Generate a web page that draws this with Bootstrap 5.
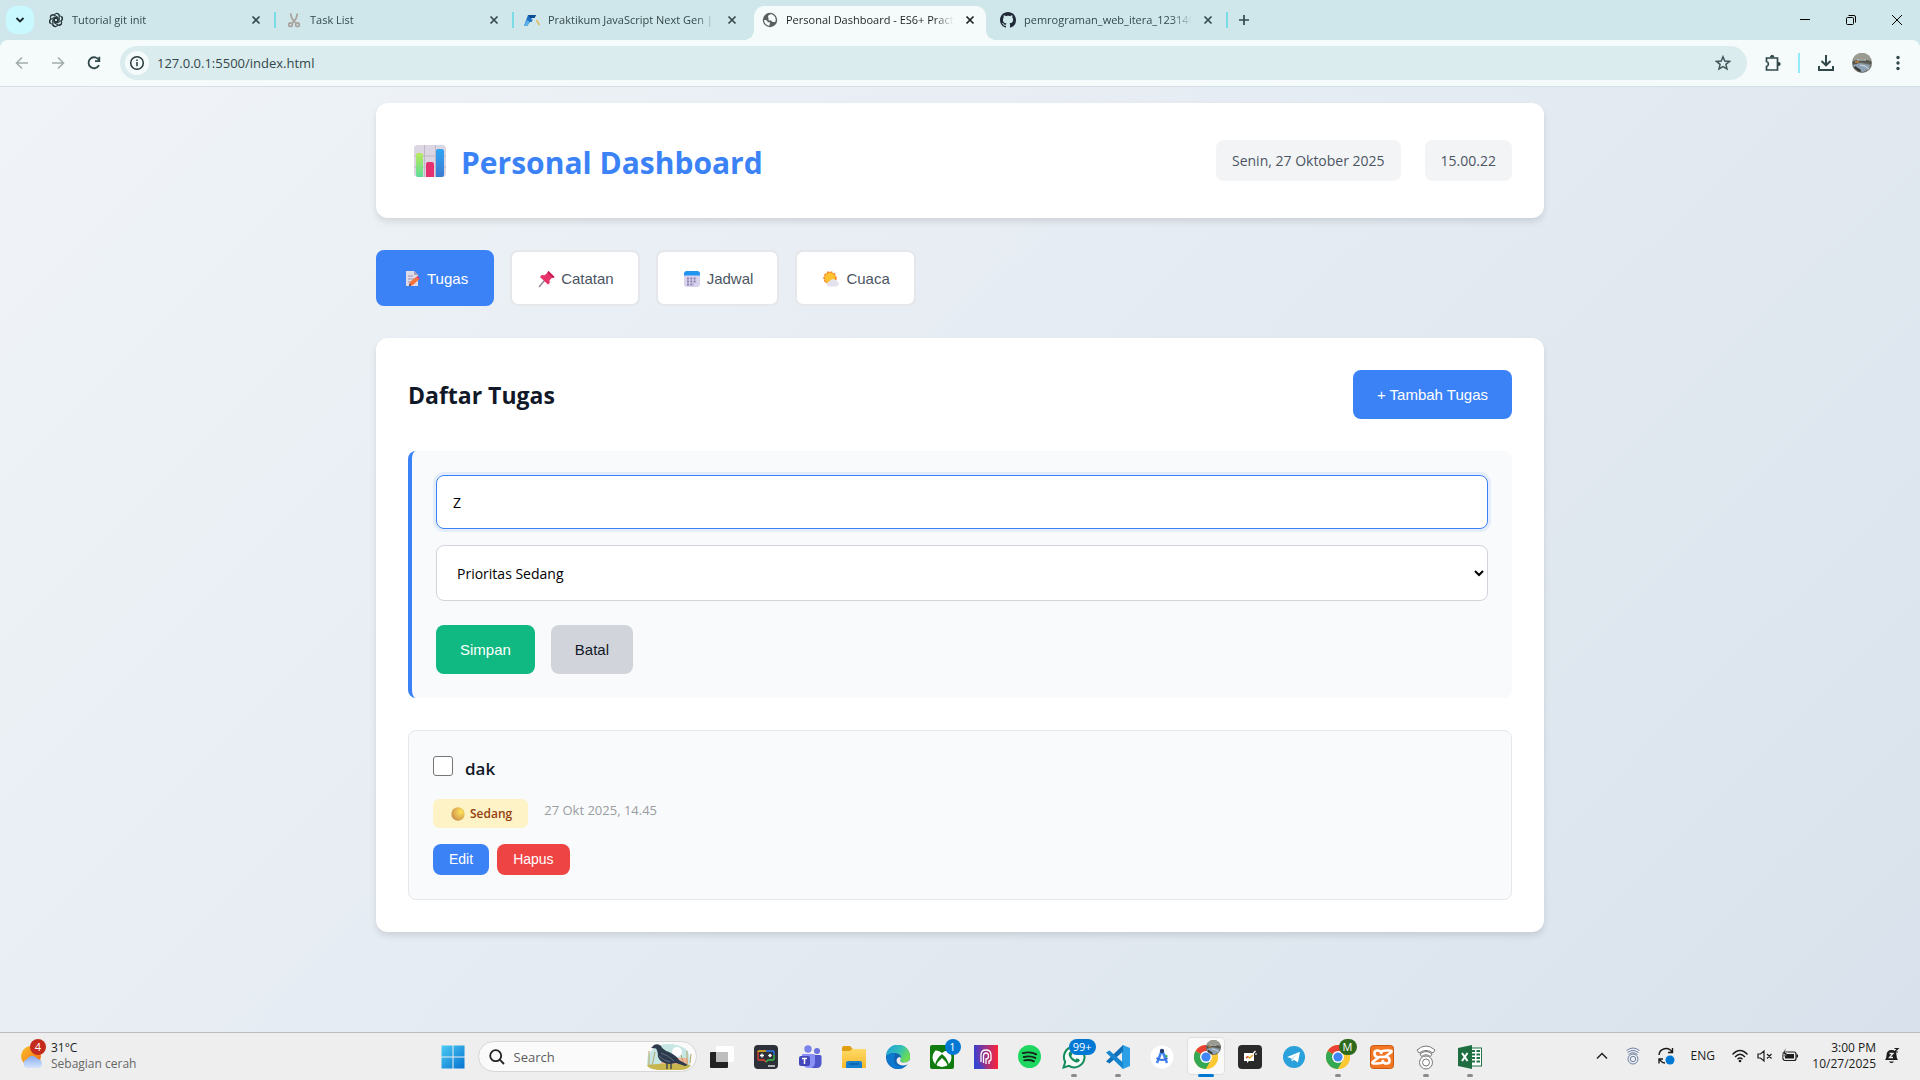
<!DOCTYPE html>
<html lang="id">
<head>
<meta charset="utf-8">
<meta name="viewport" content="width=device-width, initial-scale=1">
<title>Personal Dashboard - ES6+ Practice</title>
<link href="https://cdn.jsdelivr.net/npm/bootstrap@5.3.0/dist/css/bootstrap.min.css" rel="stylesheet">
<style>
:root{--ui:"Open Sans","Noto Sans",sans-serif;--arial:"Liberation Sans",Arial,sans-serif;--blue:#3b82f6}
body{font-family:var(--ui);font-size:15px;line-height:24px;color:#111827;background:#eeeeee}
button{font-family:var(--arial)}
svg{display:block;flex:none}
/* browser window */
.tabstrip{height:40px;background:#cfe7ea;padding-left:6px}
.bare{border:0;background:none;padding:0;display:inline-flex;align-items:center;justify-content:center;flex:none;color:inherit}
.tab-search{width:28px;height:28px;border-radius:10px;background:#c9f8ff;color:#1c2b2e;margin-right:3px}
.tab-item{position:relative;width:238px;height:34px;padding:0 11px 6px;display:flex;align-items:center;min-width:0;align-self:flex-end;color:#35494c;font-size:11px}
.tab-item a{flex:1;overflow:hidden;white-space:nowrap;color:inherit;text-decoration:none;margin:0 8px;line-height:22px;mask-image:linear-gradient(90deg,#000 88%,transparent);-webkit-mask-image:linear-gradient(90deg,#000 88%,transparent)}
.tab-item .bare{width:16px;height:16px;margin-right:0}
.tab-rule::after{content:"";position:absolute;right:-1px;top:6px;width:2px;height:16px;background:#7bdce6}
.tab-current{background:#f5fbfb;border-radius:10px 10px 0 0;width:232px;margin:0 3px;padding:0 8px 6px;color:#1c2324}
.tab-current::before,.tab-current::after{content:"";position:absolute;bottom:0;width:10px;height:10px}
.tab-current::before{left:-10px;background:radial-gradient(circle at 0 0,transparent 10px,#f5fbfb 10px)}
.tab-current::after{right:-10px;background:radial-gradient(circle at 100% 0,transparent 10px,#f5fbfb 10px)}
.new-tab{width:34px;height:28px;color:#35494c}
.win-btn{width:46px;height:34px;color:#000}
.toolbar-wrap{background:#cfe7ea}
.toolbar-row{height:47px;background:#f5fbfb;border-radius:8px 8px 0 0;border-bottom:1px solid #d3dfe2;padding:0 4px;color:#31484b}
.tool-btn{width:36px;height:34px}
.omni{height:34px;border-radius:17px;background:#dbecef;margin-left:8px;padding:0 6px 0 5px;flex:1;min-width:0}
.omni .site-info{width:24px;height:24px;border-radius:50%;background:#f5fbfb}
.omni input{flex:1;min-width:0;border:0;background:none;font:13px/20px var(--ui);color:#33484b;padding:0;margin-left:8px;outline:0}
.tool-rule{width:2px;height:20px;background:#93ebf7;margin:0 8px 0 7px}
/* page */
.page-area{flex:1;background:linear-gradient(135deg,#f0f4f8,#d9e2ec);padding:16px}
.page-wrap{max-width:1168px;margin:0 auto}
.panel{background:#fff;border-radius:12px;box-shadow:0 4px 6px rgba(0,0,0,.1)}
.panel-head{padding:32px}
.brand-row{gap:13px}
.panel-head h1{font-size:30px;line-height:47px;padding-top:4px;font-weight:700;color:var(--blue);margin:0}
.chip{background:#f3f4f6;border-radius:8px;padding:8px 16px;font-size:14px;line-height:25px;color:#4b5563}
.nav-tabs-row{margin:32px 0;gap:16px}
.nav-btn{height:56px;padding:2px 24px 0;border:2px solid #e5e7eb;border-radius:8px;background:#fff;color:#4b5563;font-size:15px;display:inline-flex;align-items:center;gap:5px}
.nav-btn.current{background:var(--blue);border-color:var(--blue);color:#fff}
.panel-body{padding:32px}
.panel-body h2{font-size:23px;font-weight:700;line-height:38px;margin:0}
.act{border:0;border-radius:8px;height:49px;padding:0 24px;font-size:15px;line-height:17px;color:#fff;background:var(--blue)}
.act-save{background:#10b981}
.act-cancel{background:#d1d5db;color:#111827}
.task-form{margin-top:32px;background:#f9fafb;border-left:4px solid var(--blue);border-radius:8px;padding:24px}
.task-form .form-control,.task-form .form-select{border:1px solid #d1d5db;border-radius:8px;padding:0 16px;font-size:14px;color:#000;height:54px;background:#fff}
.task-form .form-control{border-color:var(--blue);box-shadow:0 0 0 3px rgba(59,130,246,.1)}
.task-form .form-select{height:56px;margin:16px 0 24px;appearance:auto;padding:0 0 0 16px}
.task{margin-top:32px;border:1px solid #e5e7eb;border-radius:8px;background:#f9fafb;padding:24px}
.task-check{width:20px;height:20px;margin:1px 12px 0 0;border:1px solid #767676;border-radius:3px;flex:none}
.task-check[type=checkbox]{border-radius:3px}
.task-name{font-size:17px;line-height:28px;font-weight:600}
.task-meta{margin:16px 0;gap:16px}
.prio{background:#fef3c7;color:#92400e;border-radius:6px;font-size:12px;font-weight:600;line-height:21px;padding:4px 16px;gap:5px}
.task-date{font-size:13px;line-height:22px;color:#9a9da1}
.act-small{height:31px;padding:0 16px;font-size:14px}
.act-del{background:#ef4444}
/* taskbar */
.os-bar{height:48px;border-top:1px solid #bcbcbc;background:#eeeeee;display:grid;grid-template-columns:1fr auto 1fr;align-items:center;font-size:12px;line-height:16px;color:#1b1b1b}
.weather{margin-left:18px;gap:5px;color:#666;padding-bottom:2px}
.dock{padding-left:2px}
.dock-btn{width:44px;height:46px;position:relative}
.dock-btn.running::after{content:"";position:absolute;bottom:3px;left:19px;width:6px;height:3px;border-radius:2px;background:#8b8b8b}
.dock-btn.active::before{content:"";position:absolute;left:3px;top:3px;width:38px;height:38px;border-radius:4px;background:#f9f9f9;border:1px solid #dedede}
.dock-btn.active svg{position:relative}
.dock-btn.active::after{background:#0078d4;width:16px;left:14px}
.bubble{position:absolute;top:5px;right:3px;min-width:16px;height:16px;border-radius:8px;background:#0078d4;color:#fff;font:11px/16px var(--ui);text-align:center;padding:0 4px}
.bubble-wide{right:0}
.bubble-green{background:#2f6a1d}
.find{width:219px;height:31px;margin:0 3px;border:1px solid #d6d6d6;border-radius:16px;background:#fafafa;padding:0 4px 0 10px}
.find input{border:0;background:none;flex:1;min-width:0;margin-left:9px;padding:0;font:13px/18px var(--ui);color:#555;outline:0}
.find input::placeholder{color:#5d5d5d;opacity:1}
.tray{justify-self:end;padding:0 20px 2px 0}
.clock{text-align:right;width:77px}
</style>
<script src="https://cdn.jsdelivr.net/npm/bootstrap@5.3.0/dist/js/bootstrap.bundle.min.js"></script>
</head>
<body class="d-flex flex-column min-vh-100">

<svg width="0" height="0" class="position-absolute" aria-hidden="true">
  <defs>
    <linearGradient id="gGreen" x2="0" y2="1"><stop stop-color="#b8ea5c"/><stop offset="1" stop-color="#5fdc9a"/></linearGradient>
    <linearGradient id="gBlue" x2="0" y2="1"><stop stop-color="#2ea5f5"/><stop offset="1" stop-color="#3d7bd0"/></linearGradient>
    <linearGradient id="gWin" x2="1" y2="1"><stop stop-color="#4ccbf5"/><stop offset="1" stop-color="#0572cf"/></linearGradient>
    <linearGradient id="gSun" x2="1" y2="1"><stop stop-color="#f9c22e"/><stop offset="1" stop-color="#f7630c"/></linearGradient>
    <linearGradient id="gCloud" x2="0" y2="1"><stop stop-color="#86acf2"/><stop offset="1" stop-color="#d6e4fb"/></linearGradient>
    <radialGradient id="gDot" cx=".7" cy=".35" r=".8"><stop stop-color="#ffe359"/><stop offset="1" stop-color="#c98a4b"/></radialGradient>
    <linearGradient id="gEdge" x2="1" y2=".5"><stop stop-color="#1b9de2"/><stop offset=".6" stop-color="#35c1b5"/><stop offset="1" stop-color="#6ddc4f"/></linearGradient>
    <linearGradient id="gPurple" x2="1" y2="0"><stop stop-color="#3a3fd0"/><stop offset="1" stop-color="#ff2438"/></linearGradient>
    <linearGradient id="gFolder" x2="0" y2="1"><stop stop-color="#ffda66"/><stop offset="1" stop-color="#f8b92a"/></linearGradient>
    <symbol id="x" viewBox="0 0 16 16"><path d="M4.500 4.500l7 7m0-7l-7 7" stroke="currentColor" stroke-width="1.700"/></symbol>
    <symbol id="chrome" viewBox="0 0 24 24">
      <circle cx="12" cy="12" r="12" fill="#fcc934"/>
      <path d="M12 12L1.600 6A12 12 0 0 1 22.400 6z" fill="#ea4335"/>
      <path d="M1.600 6A12 12 0 0 0 12 24l5-9-5-3z" fill="#34a853"/>
      <path d="M22.400 6H12l5.200 9L12 24A12 12 0 0 0 22.400 6z" fill="#fcc934"/>
      <circle cx="12" cy="12" r="6" fill="#fff"/><circle cx="12" cy="12" r="4.600" fill="#4285f4"/>
    </symbol>
    <symbol id="photo" viewBox="0 0 20 20"><circle cx="10" cy="10" r="10" fill="#70716a"/><path d="M2 4a10 10 0 0 1 16 0L19 8H1z" fill="#9a9c92"/><path d="M1 8l9-2 9 2v3l-9-2-9 3z" fill="#55574f"/><path d="M1 12l7-2 10 2-1 4-6 3-8-3z" fill="#8da2b5"/><path d="M8 12l5 1 4 3M5 7h9" stroke="#d5dcdc" fill="none"/><path d="M2 15l6 4 1-2-6-4z" fill="#353630"/><path d="M3 9h4" stroke="#c7823c" stroke-width="1.500"/></symbol>
  </defs>
</svg>

<header>
  <nav class="tabstrip d-flex align-items-center" aria-label="Tab">
    <button class="bare tab-search" aria-label="Cari tab"><svg width="12" height="12" viewBox="0 0 12 12"><path d="M2.500 4l3.500 3.500L9.500 4" fill="none" stroke="currentColor" stroke-width="1.900"/></svg></button>
    <div class="tab-item tab-rule">
      <svg width="16" height="16" viewBox="0 0 16 16" fill="none" stroke="#263437" stroke-width="1.100"><g id="petal"><path d="M8 1.200a3.300 3.300 0 0 1 3.200 2.600v4.400L8 10 5.200 8.400"/><path d="M11.200 3.800a3.300 3.300 0 0 1 3 4.600"/></g><use href="#petal" transform="rotate(60 8 8)"/><use href="#petal" transform="rotate(120 8 8)"/><use href="#petal" transform="rotate(180 8 8)"/><use href="#petal" transform="rotate(240 8 8)"/><use href="#petal" transform="rotate(300 8 8)"/></svg>
      <a href="#">Tutorial git init</a><button class="bare" aria-label="Tutup"><svg width="16" height="16"><use href="#x"/></svg></button>
    </div>
    <div class="tab-item tab-rule">
      <svg width="16" height="16" viewBox="0 0 16 16" fill="none" stroke="#a9a29c" stroke-width="1.700"><path d="M4.500 1.500l1.500 5 3.500 4.500M11.500 1.500l-1.500 5L6.500 11"/><circle cx="4.500" cy="12.700" r="1.800"/><circle cx="11.500" cy="12.700" r="1.800"/></svg>
      <a href="#">Task List</a><button class="bare" aria-label="Tutup"><svg width="16" height="16"><use href="#x"/></svg></button>
    </div>
    <div class="tab-item">
      <svg width="16" height="16" viewBox="0 0 16 16"><path d="M4 3h8l-1.500 3H8L7 7.500h2L7.500 10H6L3 14H0z" fill="#1d6fc4"/><path d="M4 3h8l-1.500 3H6z" fill="#0f4a94"/><path d="M0 14l3-6 3 2-3 4z" fill="#5ab3e8"/><path d="M12.500 8l3 5" stroke="#e2b65c" stroke-width="1.500"/></svg>
      <a href="#">Praktikum JavaScript Next Gen | Modul</a><button class="bare" aria-label="Tutup"><svg width="16" height="16"><use href="#x"/></svg></button>
    </div>
    <div class="tab-item tab-current">
      <svg width="16" height="16" viewBox="0 0 16 16"><circle cx="8" cy="8" r="7.200" fill="#5a5f61"/><path d="M2 8c2 0 3 0 3.500 1.500S8 9.500 8 11s-1 1.500-.5 3A6 6 0 0 1 2 8zM9 2C8 3 6 3 6 4.500S7 6 6.500 7.500 9 8 9.500 9s2.500 1.500 4 .5A6 6 0 0 0 9 2z" fill="#f5fbfb"/></svg>
      <a href="#" aria-current="page">Personal Dashboard - ES6+ Practice</a><button class="bare" aria-label="Tutup"><svg width="16" height="16"><use href="#x"/></svg></button>
    </div>
    <div class="tab-item tab-rule">
      <svg width="16" height="16" viewBox="0 0 16 16"><path fill="#1f2937" d="M8 0C3.580 0 0 3.580 0 8c0 3.540 2.290 6.530 5.470 7.590.4.070.55-.17.55-.38 0-.19-.01-.82-.01-1.490-2.010.37-2.530-.49-2.690-.94-.09-.23-.48-.94-.82-1.130-.28-.15-.68-.52-.01-.53.63-.01 1.080.58 1.230.82.72 1.210 1.870.87 2.330.66.07-.52.28-.87.51-1.070-1.780-.2-3.640-.89-3.640-3.950 0-.87.31-1.590.82-2.150-.08-.2-.36-1.020.08-2.120 0 0 .67-.21 2.200.82.64-.18 1.320-.27 2-.27s1.360.09 2 .27c1.530-1.040 2.200-.82 2.200-.82.44 1.100.16 1.920.08 2.120.51.56.82 1.270.82 2.150 0 3.070-1.870 3.750-3.650 3.950.29.25.54.73.54 1.480 0 1.070-.01 1.930-.01 2.200 0 .21.15.46.55.38A8 8 0 0 0 16 8c0-4.420-3.580-8-8-8z"/></svg>
      <a href="#">pemrograman_web_itera_123140</a><button class="bare" aria-label="Tutup"><svg width="16" height="16"><use href="#x"/></svg></button>
    </div>
    <button class="bare new-tab" aria-label="Tab baru"><svg width="12" height="12" viewBox="0 0 12 12"><path d="M6 1v10M1 6h10" stroke="currentColor" stroke-width="1.700"/></svg></button>
    <div class="ms-auto d-flex">
      <button class="bare win-btn" aria-label="Minimalkan"><svg width="12" height="12"><path d="M1 5.500h10" stroke="#000"/></svg></button>
      <button class="bare win-btn" aria-label="Pulihkan"><svg width="12" height="12" fill="none" stroke="#000"><rect x="1.500" y="3.500" width="7" height="7" rx="1"/><path d="M3.500 1.500h5.500a1.500 1.500 0 0 1 1.500 1.500v5.500"/></svg></button>
      <button class="bare win-btn" aria-label="Tutup"><svg width="12" height="12"><path d="M1 1l10 10M11 1L1 11" stroke="#000"/></svg></button>
    </div>
  </nav>
  <div class="toolbar-wrap">
    <div class="toolbar-row d-flex align-items-center">
      <button class="bare tool-btn" aria-label="Kembali"><svg width="14" height="14" viewBox="0 0 14 14" fill="none" stroke="#a3adae" stroke-width="1.600"><path d="M13 7H2M7 1.500L1.500 7 7 12.500"/></svg></button>
      <button class="bare tool-btn" aria-label="Maju"><svg width="14" height="14" viewBox="0 0 14 14" fill="none" stroke="#a3adae" stroke-width="1.600"><path d="M1 7h11M7 1.500L12.500 7 7 12.500"/></svg></button>
      <button class="bare tool-btn" aria-label="Muat ulang"><svg width="14" height="14" viewBox="0 0 14 14" fill="none" stroke="currentColor" stroke-width="1.800"><path d="M12 9.200A5.500 5.500 0 1 1 12 4.300"/><path d="M12.300 .8v4.300H8"/></svg></button>
      <div class="omni d-flex align-items-center">
        <button class="bare site-info" aria-label="Info situs"><svg width="16" height="16" viewBox="0 0 16 16" fill="none" stroke="#27383b" stroke-width="1.500"><circle cx="8" cy="8" r="6.300"/><path d="M8 7v4.300M8 4.400V6"/></svg></button>
        <input type="text" aria-label="Alamat" value="127.0.0.1:5500/index.html">
        <button class="bare tool-btn" aria-label="Bookmark"><svg width="16" height="16" viewBox="0 0 16 16" fill="none" stroke="#41575a" stroke-width="1.500"><path d="M8 1.700l1.800 4.300 4.700.4-3.600 3 1.100 4.500L8 11.500l-4 2.400 1.100-4.500-3.600-3L6.200 6z"/></svg></button>
      </div>
      <button class="bare tool-btn ms-2" aria-label="Ekstensi"><svg width="18" height="18" viewBox="0 0 18 18" fill="none" stroke="currentColor" stroke-width="1.700"><path d="M2.500 4h11v12h-11v-3.500c2.500-.5 2.500-4.500 0-5z"/><path d="M6.500 3a1.700 1.700 0 0 1 3.400 0zM14.500 8.300a1.700 1.700 0 0 1 0 3.400z" fill="currentColor" stroke-width="1"/></svg></button>
      <span class="tool-rule"></span>
      <button class="bare tool-btn" aria-label="Unduhan"><svg width="18" height="18" viewBox="0 0 18 18" fill="none" stroke="currentColor" stroke-width="2"><path d="M9 1v10M4.500 7L9 11.300 13.500 7M2 12v4h14v-4"/></svg></button>
      <button class="bare tool-btn" aria-label="Profil"><svg width="20" height="20"><use href="#photo"/></svg></button>
      <button class="bare tool-btn" aria-label="Menu"><svg width="4" height="16" fill="currentColor"><circle cx="2" cy="2.500" r="1.700"/><circle cx="2" cy="8" r="1.700"/><circle cx="2" cy="13.500" r="1.700"/></svg></button>
    </div>
  </div>
</header>

<main class="page-area">
  <div class="page-wrap">
    <section class="panel panel-head d-flex align-items-center justify-content-between">
      <div class="brand-row d-flex align-items-center">
        <svg class="ms-1" width="36" height="34" viewBox="0 0 36 34"><rect x="2" y="1" width="32" height="32" rx="4" fill="#dcd6e3"/><path d="M12.500 1v32M23.500 1v32M2 12h32M2 23h32" stroke="#bfb8c8"/><path d="M4 11q0-2 2-2h3q2 0 2 2v22H6q-2 0-2-2z" fill="url(#gGreen)"/><path d="M14 20q0-2 2-2h4q2 0 2 2v13h-8z" fill="#e5316f"/><path d="M24 7q0-2 2-2h4q2 0 2 2v24q0 2-2 2h-6z" fill="url(#gBlue)"/></svg>
        <h1>Personal Dashboard</h1>
      </div>
      <div class="d-flex gap-4">
        <span class="chip">Senin, 27 Oktober 2025</span>
        <span class="chip">15.00.22</span>
      </div>
    </section>

    <nav class="nav-tabs-row d-flex flex-wrap" aria-label="Bagian">
      <button class="nav-btn current"><svg width="20" height="20" viewBox="0 0 20 20"><path d="M4 2h8l4 4v11H4z" fill="#e0dbe8"/><path d="M12 2v4h4z" fill="#a7a0b8"/><path d="M6 7h5M6 10h6M6 13h3" stroke="#9c93b3"/><path d="M7 17l1-4 6-5 3 2.500-6 5.500z" fill="#f9733a"/><path d="M14 8l1.500-1L18 9.500 17 10.500z" fill="#e23a67"/><path d="M7 17l.6-2.500 1.800 1.800z" fill="#44353c"/></svg>Tugas</button>
      <button class="nav-btn"><svg width="20" height="20" viewBox="0 0 20 20"><path d="M8.500 11.500L3 18" stroke="#8e8a98" stroke-width="1.500"/><path d="M12.500 2l6 6-1.500 1-1-.3-2.500 2.800.3 2.500-1.800 1.500-8-7.500L5.500 6l3 .3 3-2.600z" fill="#e8336a"/><path d="M12.500 2l6 6-1.500 1-5.700-5.500z" fill="#c41b50"/></svg>Catatan</button>
      <button class="nav-btn"><svg width="20" height="20" viewBox="0 0 20 20"><rect x="2" y="2" width="16" height="16" rx="3" fill="#d9d2ec"/><path d="M2 6.500V5q0-3 3-3h10q3 0 3 3v1.500z" fill="#1f95f0"/><path d="M5 9.500h10M5 12.500h10M5 15.500h7" stroke="#8b80ad" stroke-width="1.800" stroke-dasharray="2 1.300"/></svg>Jadwal</button>
      <button class="nav-btn"><svg width="20" height="20" viewBox="0 0 20 20"><circle cx="9" cy="9" r="6" fill="#f39a2d" stroke="#f4862c" stroke-width="1.500" stroke-dasharray="2 1.500"/><circle cx="9" cy="9" r="5.200" fill="#fcc22f"/><path d="M8.500 17.500a2.500 2.500 0 0 1 0-5 3.700 3.700 0 0 1 6.500-.8 3 3 0 0 1 1 5.800z" fill="#e3e2ee"/></svg>Cuaca</button>
    </nav>

    <section class="panel panel-body">
      <div class="d-flex align-items-center justify-content-between">
        <h2>Daftar Tugas</h2>
        <button class="act">+ Tambah Tugas</button>
      </div>

      <form class="task-form" onsubmit="return false">
        <label class="visually-hidden" for="taskTitle">Judul tugas</label>
        <input class="form-control" id="taskTitle" type="text" value="Z">
        <label class="visually-hidden" for="taskPrio">Prioritas</label>
        <select class="form-select" id="taskPrio"><option>Prioritas Sedang</option></select>
        <div class="d-flex gap-3">
          <button class="act act-save">Simpan</button>
          <button class="act act-cancel" type="button">Batal</button>
        </div>
      </form>

      <article class="task">
        <div class="d-flex align-items-start">
          <input class="form-check-input task-check" type="checkbox" id="task1">
          <label class="task-name" for="task1">dak</label>
        </div>
        <div class="task-meta d-flex align-items-start">
          <span class="prio d-flex align-items-center"><svg width="16" height="14" viewBox="0 0 16 14"><circle cx="9" cy="7" r="6.700" fill="url(#gDot)"/></svg>Sedang</span>
          <span class="task-date">27 Okt 2025, 14.45</span>
        </div>
        <div class="d-flex gap-2">
          <button class="act act-small">Edit</button>
          <button class="act act-small act-del">Hapus</button>
        </div>
      </article>
    </section>
  </div>
</main>

<footer class="os-bar">
  <a href="#" class="weather d-flex align-items-center text-decoration-none">
    <svg width="28" height="34" viewBox="0 0 28 34"><circle cx="13" cy="17" r="10" fill="url(#gSun)"/><path d="M9 29a4.500 4.500 0 0 1 0-8.700 6 6 0 0 1 10.500-.3A4.600 4.600 0 0 1 20.500 29z" fill="url(#gCloud)"/><circle cx="20" cy="8" r="8" fill="#c42b1c"/><text x="20" y="12" font-size="11" fill="#fff" text-anchor="middle">4</text></svg>
    <span><span class="d-block text-dark">31°C</span><span class="d-block">Sebagian cerah</span></span>
  </a>
  <div class="dock d-flex align-items-center">
    <button class="bare dock-btn" aria-label="Mulai"><svg width="24" height="24" viewBox="0 0 24 24" fill="url(#gWin)"><path d="M.5.500h11v11H.5zM12.500.500h11v11h-11zM.5 12.500h11v11H.5zM12.500 12.500h11v11h-11z"/></svg></button>
    <div class="find d-flex align-items-center">
      <svg width="16" height="16" viewBox="0 0 16 16" fill="none" stroke="#222" stroke-width="1.800"><circle cx="6.700" cy="6.700" r="5.500"/><path d="M10.700 10.700L15 15"/></svg>
      <input type="text" placeholder="Search" aria-label="Search">
      <svg width="46" height="26" viewBox="0 0 46 26"><path d="M6 6q6-6 16-6t18 5q4 3 4 15-3 4-12 4H10Q1 25 1 20 1 10 6 6z" fill="#c5e6e3"/><circle cx="31" cy="8" r="5" fill="#fff"/><path d="M20 14h22v6H14z" fill="#f4b49a"/><path d="M1 21q20-3 44 0-2 5-12 5H12Q2 25 1 21z" fill="#c6b64d"/><path d="M3 21V7M6 22L9 8M41 20V7M38 20l-3-9M44 19l1-9" stroke="#b7a56a" fill="none"/><path d="M5 4l3-3q4-2 7 1 2 4 8 6 8 4 10 8l9 5-3 1-9-3-6 1q-9 0-12-7 0-6-2-8.500z" fill="#2d3a4c"/><path d="M15 9q7 2 13 8M13 12q5 5 11 6" stroke="#5d6d84" fill="none"/><path d="M21 19v6M25 19v6" stroke="#2d3a4c" stroke-width="1.300"/></svg>
    </div>
    <button class="bare dock-btn" aria-label="Tampilan tugas"><svg width="24" height="24" viewBox="0 0 24 24"><rect y="7" width="18" height="16" rx="1" fill="#232323"/><rect x="6" y="1" width="18" height="16" rx="1" fill="#fff" opacity=".9"/><path d="M6 7h12v10H6z" fill="#bdbdbd"/></svg></button>
    <button class="bare dock-btn" aria-label="Game"><svg width="24" height="24" viewBox="0 0 24 24" fill="none"><rect width="24" height="24" rx="4" fill="#2d3038"/><path d="M12 6H5q-1 0-1 1" stroke="#f6b91f" stroke-width="1.300"/><path d="M12 6h7q1 0 1 1v3" stroke="#2b7df0" stroke-width="1.300"/><path d="M4 7v7q0 1 1 1h5l2 2" stroke="#e9412f" stroke-width="1.300"/><path d="M20 10v4q0 1-1 1h-5l-2 2" stroke="#3ac04e" stroke-width="1.300"/><path d="M6 10.500h4M8 8.500v4" stroke="#fff" stroke-width="1.300"/><path d="M16 8.500l2 2-2 2-2-2z" fill="#fff"/><path d="M14 21h7" stroke="#ddd" stroke-width="1.500"/></svg></button>
    <button class="bare dock-btn" aria-label="Teams"><svg width="24" height="24" viewBox="0 0 24 24"><circle cx="10" cy="4" r="3.700" fill="#7b83eb"/><circle cx="19" cy="6" r="3" fill="#6a72e0"/><path d="M14 10h8q1.500 0 1.500 1.500V18q0 5-5 5h-5z" fill="#4f56c9"/><path d="M4 9h12q1 0 1 1.500V17q0 6-6 6t-7-6z" fill="#8a90f5"/><rect x="1" y="11" width="11" height="10" rx="2" fill="#4248b8"/><path d="M4 13.500h5M6.500 13.500V19" stroke="#fff" stroke-width="1.500"/></svg></button>
    <button class="bare dock-btn" aria-label="File Explorer"><svg width="24" height="24" viewBox="0 0 24 24"><path d="M0 3q0-2 2-2h6l3 3h11q2 0 2 2v5H0z" fill="#e0a012"/><path d="M0 6h8l2-2h12q2 0 2 2v16q0 1-1 1H1q-1 0-1-1z" fill="url(#gFolder)"/><path d="M4 23v-5q0-2 2-2h12q2 0 2 2v5z" fill="#1580cf"/><path d="M7 19h10" stroke="#0a5ea6" stroke-width="1.500"/></svg></button>
    <button class="bare dock-btn" aria-label="Edge"><svg width="24" height="24" viewBox="0 0 24 24"><circle cx="12" cy="12" r="12" fill="#1463b0"/><path d="M0 11A12 12 0 0 1 24 12c0 4-3 5.500-6 5.500-3.500 0-4.500-1.500-3.500-3 2-4-2-6.500-6-6.500-4 0-7 2-8.500 3z" fill="url(#gEdge)"/><path d="M8 14c0 7 7 9 12.500 6.200A12 12 0 0 1 12 24C5 24 1 18 .500 12 2 8.500 6 8 9 8.500 10 9.500 8 11 8 14z" fill="#0c79cf"/><path d="M14.500 14.500c-1 1.500 0 3 3.500 3q3.500 0 5.500-2.500l.5 2q-3 4-8 3.500-5.500-1-5.500-5.500 1-3 3.500-3 1.500 1 .5 2.500z" fill="#eee"/></svg></button>
    <button class="bare dock-btn" aria-label="Xbox"><svg width="24" height="24" viewBox="0 0 24 24"><rect width="24" height="24" rx="2" fill="#107c10"/><circle cx="12" cy="12.500" r="9.500" fill="#fff"/><path d="M5.500 5.500Q9 5 12 8q3-3 6.500-2.500Q16 2.500 12 2.500T5.500 5.500zM5 20q1-6 7-11 6 5 7 11l-1 1q-2-5-6-8-4 3-6 8z" fill="#107c10"/></svg><span class="bubble">1</span></button>
    <button class="bare dock-btn" aria-label="Headset"><svg width="24" height="24" viewBox="0 0 24 24" fill="none"><rect width="24" height="24" fill="url(#gPurple)"/><path d="M0 12l12 12H0z" fill="#2a49d8" opacity=".5"/><path d="M7 17V10q0-5 5-5t5 5v4q0 2-2 2v3M9.500 18V11q0-3 2.500-3t2.500 3-2.500 3v5" stroke="#fff" stroke-width="1.300"/></svg></button>
    <button class="bare dock-btn" aria-label="Spotify"><svg width="23" height="23" viewBox="0 0 24 24" fill="none"><circle cx="12" cy="12" r="12" fill="#1ed760"/><path d="M5 8.500q8-2 14 1.200M6 12.500q7-1.700 12 1M6.500 16q6-1.200 10 1" stroke="#15241a" stroke-width="2" stroke-linecap="round"/></svg></button>
    <button class="bare dock-btn running" aria-label="WhatsApp"><svg width="24" height="24" viewBox="0 0 24 24"><path d="M1.500 22.500L3.200 17A10.300 10.300 0 1 1 7 20.900z" fill="#f4faf6" stroke="#128c5a" stroke-width="2"/><path d="M8 6.500q-2 1.500-1 4.500 2 4.500 6.500 6.300 3 .7 4.200-1.500l-.2-1.300-2.700-1.200-1.500 1.400q-2.800-1-4.100-3.700L10.300 9.500 9.300 6.800z" fill="#128c5a"/></svg><span class="bubble bubble-wide">99+</span></button>
    <button class="bare dock-btn running" aria-label="VS Code"><svg width="24" height="24" viewBox="0 0 24 24"><path d="M17 0l7 3v18l-7 3-1-1V1z" fill="#2b9fe6"/><path d="M17 0v6.500L3.500 18.500 0 16.500 17 0z" fill="#0f6fb8"/><path d="M17 24v-6.500L3.500 5.500 0 7.500 17 24z" fill="#1785ce"/></svg></button>
    <button class="bare dock-btn" aria-label="Android Studio"><svg width="24" height="24" viewBox="0 0 24 24" fill="none"><circle cx="12" cy="12" r="11.500" fill="#fff"/><path d="M12 5L7 18M12 5l5 13" stroke="#4285f4" stroke-width="2.500"/><path d="M6.500 13q5.500 4 11 0" stroke="#3673dd" stroke-width="2"/><circle cx="12" cy="6" r="2.200" fill="#24406f"/><path d="M15 9l3 2-2 2z" fill="#34a853"/></svg></button>
    <button class="bare dock-btn running active" aria-label="Chrome"><svg width="30" height="34" viewBox="0 0 30 34"><use href="#chrome" x="3" y="5" width="24" height="24"/><use href="#photo" x="15" y="0" width="15" height="15"/></svg></button>
    <button class="bare dock-btn" aria-label="Grafik"><svg width="24" height="24" viewBox="0 0 24 24" fill="none"><rect width="24" height="24" rx="4" fill="#2a2a2a"/><path d="M6 8h10v8h-5l-2 2v-2H6z" fill="#fff"/><path d="M8 13l2-1.500 1.500 1.500 3.500-3" stroke="#e9a21b" stroke-width="1.300"/><path d="M8 13l2-1.500" stroke="#e34040" stroke-width="1.300"/><path d="M15.500 8l2-2M17.500 9.500l1-1" stroke="#fff" stroke-width="1.300"/></svg></button>
    <button class="bare dock-btn" aria-label="Telegram"><svg width="22" height="22" viewBox="0 0 24 24"><circle cx="12" cy="12" r="12" fill="#2aa1da"/><path d="M4.500 12L18.500 6.300 16.300 18l-4.500-3-2 2-.5-3.500z" fill="#fff"/><path d="M9.300 13.500L16 8.500l-5 5.500-1.200 3z" fill="#b9dff2"/></svg></button>
    <button class="bare dock-btn running" aria-label="Chrome M"><svg width="24" height="24"><use href="#chrome"/></svg><span class="bubble bubble-green">M</span></button>
    <button class="bare dock-btn" aria-label="XAMPP"><svg width="24" height="24" viewBox="0 0 24 24" fill="none"><rect x=".5" y=".5" width="23" height="23" rx="3" fill="#f37623" stroke="#c95a13"/><path d="M12 8.500Q10 5 7 5.500T4.500 9 7.500 12 4.500 15.500 7.500 18.500 12 15.500Q14 19 17 18.500T19.500 15 16.500 12 19.500 8.500 16.500 5.500 12 8.500z" stroke="#fff" stroke-width="2.600"/><path d="M9 12h6" stroke="#fff" stroke-width="2.600"/></svg></button>
    <button class="bare dock-btn running" aria-label="Podcast"><svg width="24" height="26" viewBox="0 0 24 26" fill="#fff" stroke="#777"><path d="M3 6q9-8 18 0l-2 3q-7-5-14 0z"/><path d="M6 10q6-5 12 0l-1.500 2.500q-4.500-3.500-9 0z"/><circle cx="12" cy="18.500" r="6.500"/><circle cx="12" cy="18.500" r="3.500"/></svg></button>
    <button class="bare dock-btn running" aria-label="Excel"><svg width="24" height="24" viewBox="0 0 24 24"><rect x="12" y="3" width="11.500" height="18" fill="#fff" stroke="#217346"/><path d="M14 6h3M18.500 6H22M14 9.500h3M18.500 9.500H22M14 13h3M18.500 13H22M14 16.500h3M18.500 16.500H22" stroke="#217346" stroke-width="2"/><path d="M0 3l14-3v24L0 21z" fill="#1e6e42"/><path d="M4 8l5.500 8M9.500 8L4 16" stroke="#fff" stroke-width="2"/></svg></button>
  </div>
  <div class="tray d-flex align-items-center">
    <button class="bare me-3" aria-label="Ikon tersembunyi"><svg width="14" height="10" fill="none" stroke="#222" stroke-width="1.500"><path d="M2 7.500L7 2.500l5 5"/></svg></button>
    <svg class="me-3" width="16" height="18" viewBox="0 0 16 18" fill="none" stroke="#6f82a8"><path d="M1.500 3.500q6.500-5 13 0M2.500 5.500q5.500-4 11 0M3.500 7.500q4.500-3.500 9 0"/><circle cx="8" cy="12" r="5"/><circle cx="8" cy="12" r="2.700"/></svg>
    <svg class="me-3" width="18" height="18" viewBox="0 0 18 18" fill="none" stroke="#1b1b1b" stroke-width="1.400"><path d="M2 8a7 7 0 0 1 13-3M15.500 1v4.500H11M8 16a7 7 0 0 1-5.500-4M2 16.500V12h4"/><circle cx="13" cy="13" r="4.500" fill="#0078d4" stroke="none"/></svg>
    <span class="me-3">ENG</span>
    <svg class="me-2" width="18" height="14" viewBox="0 0 18 14" fill="none" stroke="#1b1b1b" stroke-width="1.300"><path d="M1.500 5.500q7.500-8 15 0M4 8q5-5.500 10 0M6.500 10.300q2.500-2.500 5 0"/><circle cx="9" cy="12" r="1.300" fill="#1b1b1b" stroke="none"/></svg>
    <svg class="me-2" width="16" height="14" viewBox="0 0 16 14" fill="none" stroke="#1b1b1b" stroke-width="1.200"><path d="M1 5h2.500L7 2v10L3.500 9H1zM10 5l4.500 4.500M14.500 5L10 9.500"/></svg>
    <svg width="18" height="16" viewBox="0 0 18 16"><rect x="2" y="4" width="13" height="8.500" rx="2" fill="none" stroke="#1b1b1b" stroke-width="1.200"/><path d="M4 6h9v4.500H4zM15.500 6.500H17v3h-1.500z" fill="#1b1b1b"/><path d="M5 0L1 6h2.500L2.500 10 6.500 4.500H4z" fill="#1b1b1b" stroke="#eee" stroke-width=".5"/></svg>
    <div class="clock"><div>3:00 PM</div><div>10/27/2025</div></div>
    <svg class="ms-2" width="16" height="18" viewBox="0 0 16 18"><path d="M1 13q1.500-1.500 1.500-4.500 0-5.500 5-5.500t5 5.500q0 3 1.500 4.500zM5 14.500h5q-2.500 3-5 0z" fill="#1b1b1b"/><path d="M5.500 6.500h3.500L5.500 10.500H9" stroke="#eee" stroke-width="1.300" fill="none"/><path d="M10.500 1.500H14L10.500 5H14" stroke="#1b1b1b" stroke-width="1.200" fill="none"/></svg>
  </div>
</footer>
</body>
</html>
